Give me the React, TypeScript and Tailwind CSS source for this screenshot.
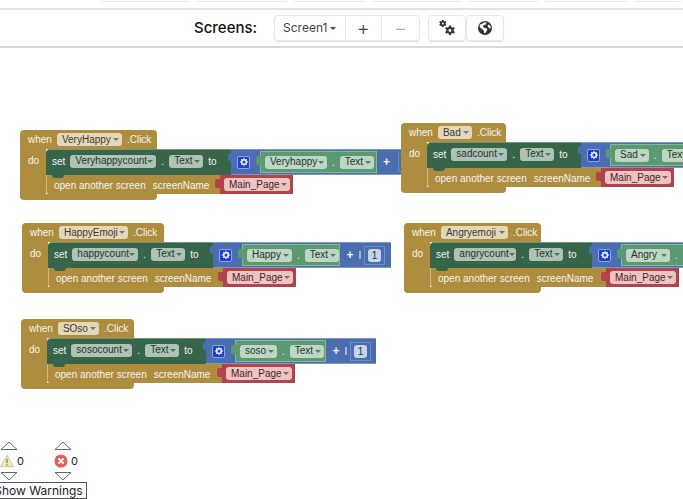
import React from "react";

function Field({ label, cls, wide }: { label: string; cls: string; wide: string }) {
  return (
    <span className={`flex h-[13px] shrink-0 items-center justify-between rounded-[3px] pl-[5px] pr-[3px] text-[10px] leading-none ${cls} ${wide}`}>
      <span className="whitespace-nowrap">{label}</span>
      <span className="h-0 w-0 border-x-[3px] border-t-[3px] border-x-transparent border-t-current opacity-60" />
    </span>
  );
}

function Notch({ cls }: { cls: string }) {
  return <span className={`absolute left-[-5px] top-[4px] h-[9px] w-[5px] rounded-l-[2px] ${cls}`} />;
}

function Gear() {
  return (
    <span className="flex h-[13px] w-[13px] shrink-0 items-center justify-center rounded-[2px] border border-[#8ea6d8] bg-[#1d3fd6]">
      <svg viewBox="0 0 12 12" className="h-[10px] w-[10px]" fill="none" stroke="#fff" strokeWidth="1.7">
        <circle cx="6" cy="6" r="2.8" />
        <path d="M6 1v1.5M6 9.5V11M1 6h1.5M9.5 6H11M2.5 2.5l1 1M8.5 8.5l1 1M2.5 9.5l1-1M8.5 3.5l1-1" strokeWidth="1.2" />
      </svg>
    </span>
  );
}

function Block(p: {
  pos: string;
  event: string;
  eventW: string;
  headW: string;
  setW: string;
  countName: string;
  countW: string;
  src: string;
  srcW: string;
  blueW: string;
  greenW: string;
  openW: string;
  showSum: boolean;
  one?: boolean;
}) {
  return (
    <div className={`absolute isolate font-['Liberation_Sans',Arial,sans-serif] text-[10px] text-[#f4f4f0] ${p.pos}`}>
      <div className={`flex h-[19px] items-center gap-[5px] rounded-t-[4px] bg-[#ae8d3e] pl-[8px] ${p.headW}`}>
        <span>when</span>
        <Field label={p.event} wide={p.eventW} cls="bg-[#e2d7bb] text-[#3f3a2a]" />
        <span>.Click</span>
      </div>
      <div className="flex">
        <div className="w-[26px] shrink-0 bg-[#ae8d3e] pl-[8px] pt-[4px]">do</div>
        <div className="flex flex-col">
          <div className="relative z-10 flex h-[26px]">
            <div className={`relative flex shrink-0 items-center gap-[5px] rounded-tl-[4px] border-t border-[#6f9580] bg-[#37654a] pb-[3px] pl-[6px] ${p.setW}`}>
              <span>set</span>
              <Field label={p.countName} wide={p.countW} cls="bg-[#afc2b6] text-[#22382c]" />
              <span>.</span>
              <Field label="Text" wide="w-[34px]" cls="bg-[#afc2b6] text-[#22382c]" />
              <span>to</span>
              <span className="absolute right-0 top-[3px] h-[8px] w-[3px] rounded-l-[2px] bg-[#4a6eb0]" />
              <span className="absolute bottom-[-3px] left-[6px] h-[3px] w-[12px] rounded-b-[4px] bg-[#37654a]" />
            </div>
            <div className={`flex shrink-0 items-center border-y border-[#7d97cb] bg-[#4a6eb0] pl-[6px] ${p.blueW}`}>
              <Gear />
              <div className={`relative ml-[10px] flex h-[22px] shrink-0 items-center gap-[5px] border border-[#86b996] bg-[#5b9a70] pl-[4px] ${p.greenW}`}>
                <Notch cls="bg-[#5b9a70]" />
                <Field label={p.src} wide={p.srcW} cls="bg-[#bdd6c5] text-[#1f3527]" />
                <span>.</span>
                <Field label="Text" wide="w-[34px]" cls="bg-[#bdd6c5] text-[#1f3527]" />
              </div>
              {p.showSum && (
                <>
                  <span className="ml-[6px] w-[8px] text-center text-[12px] font-bold">+</span>
                  <span className="ml-[5px] h-[8px] w-[2px] bg-[#9db2dc]" />
                  <div className="ml-[3px] flex h-[19px] w-[21px] shrink-0 items-center justify-center border border-[#6f8cc4] bg-[#4a6eb0]">
                    {p.one && <span className="flex h-[13px] w-[13px] items-center justify-center rounded-[3px] bg-[#c8d4ea] text-[#1c2c4d]">1</span>}
                  </div>
                </>
              )}
            </div>
          </div>
          <div className="flex h-[19px]">
            <div className={`flex shrink-0 items-center rounded-bl-[3px] border-l border-[#cdb883] bg-[#ae8d3e] pl-[7px] pt-[1px] ${p.openW}`}>
              <span className="whitespace-nowrap">open another screen</span>
              <span className="ml-[7px] whitespace-nowrap">screenName</span>
            </div>
            <div className="relative flex h-[19px] w-[73px] shrink-0 items-center bg-[#b2434b] pl-[4px]">
              <Notch cls="bg-[#b2434b]" />
              <Field label="Main_Page" wide="w-[66px]" cls="bg-[#edc4c4] text-[#4a1e22]" />
            </div>
          </div>
        </div>
      </div>
      <div className={`h-[6px] rounded-b-[4px] bg-[#ae8d3e] ${p.headW}`} />
    </div>
  );
}

function WarnCol({ icon, cls }: { icon: React.ReactNode; cls: string }) {
  return (
    <div className={`flex w-[24px] flex-col ${cls}`}>
      <svg viewBox="0 0 18 9" className="h-[9px] w-[18px]" fill="none" stroke="#666"><path d="M1 8.5 9 1l8 7.5z" /></svg>
      <div className="my-[3px] flex h-[16px] items-center gap-[3px] text-[11px] text-[#222]">
        {icon}
        <span>0</span>
      </div>
      <svg viewBox="0 0 18 9" className="h-[9px] w-[18px]" fill="none" stroke="#666"><path d="M1 .5 9 8l8-7.5z" /></svg>
    </div>
  );
}

function TopPill({ w }: { w: string }) {
  return <div className={`h-[2px] shrink-0 rounded-b-[2px] border-b border-[#e8e8e8] ${w}`} />;
}

export default function App() {
  return (
    <div className="relative h-[499px] w-[683px] overflow-hidden bg-white font-['Inter',sans-serif]">
      <div className="flex h-[10px] gap-[6px] border-b-2 border-[#e2e2e2] pl-[101px]">
        <TopPill w="w-[89px]" />
        <TopPill w="w-[92px]" />
        <TopPill w="w-[72px]" />
        <TopPill w="w-[90px]" />
        <TopPill w="w-[70px]" />
        <TopPill w="w-[84px]" />
        <TopPill w="w-[47px]" />
      </div>
      <div className="flex h-[38px] items-center border-b-2 border-[#d8d8d8] pl-[194px]">
        <span className="w-[80px] text-[15px] font-medium text-[#111]">Screens:</span>
        <div className="flex h-[26px] w-[146px] rounded-[4px] border border-[#e6e6e6] text-[#444] shadow-[0_1px_1px_#ddd]">
          <div className="flex w-[71px] items-center justify-center gap-[3px] border-r border-[#e6e6e6] text-[12px]">
            Screen1
            <span className="h-0 w-0 border-x-[3px] border-t-[3px] border-x-transparent border-t-[#444]" />
          </div>
          <div className="flex w-[37px] items-center justify-center border-r border-[#e6e6e6] text-[20px] font-light">+</div>
          <div className="flex w-[37px] items-center justify-center text-[20px] font-light text-[#aaa]">−</div>
        </div>
        <div className="ml-[8px] flex h-[26px]">
          <div className="flex w-[38px] items-center justify-center rounded-[4px] border border-[#e6e6e6] shadow-[0_1px_1px_#ddd]">
            <svg viewBox="0 0 18 18" className="h-[18px] w-[18px]" fill="#333">
              <path fillRule="evenodd" d="M11 6.5h2l.3 1.6 1.2.6 1.4-.8 1 1.7-1.2 1v1.4l1.2 1-1 1.7-1.4-.8-1.2.6-.3 1.6h-2l-.3-1.6-1.2-.6-1.4.8-1-1.7 1.2-1V10.6l-1.2-1 1-1.7 1.4.8 1.2-.6zM12 10a1.4 1.4 0 1 0 0 2.9 1.4 1.4 0 0 0 0-2.9z" />
              <path fillRule="evenodd" d="M4 1h1.6l.2 1.1.8.4 1-.6.8 1.3-.8.8v1l.8.8-.8 1.3-1-.6-.8.4-.2 1.1H4l-.2-1.1-.8-.4-1 .6-.8-1.3.8-.8v-1l-.8-.8.8-1.3 1 .6.8-.4zM4.8 3.5a1 1 0 1 0 0 2 1 1 0 0 0 0-2z" />
            </svg>
          </div>
          <div className="flex w-[38px] items-center justify-center rounded-[4px] border border-[#e6e6e6] shadow-[0_1px_1px_#ddd]">
            <svg viewBox="0 0 16 16" className="h-[16px] w-[16px]" fill="#333">
              <path d="M8 1a7 7 0 1 0 0 14A7 7 0 0 0 8 1zM3 4.5 5 4l1.5-1.5L9 2.3l.5 1.2L8 5 6.5 5 6 6.5 7.5 8l2 .2.8 1.3-1 2-1.3 1.8-.9-.4-.3-2.4L5 9 3 7.5 2.6 6zM12 4.5l1.4 1.7.5 2-1.2.2L11 7l-.4-1.5z" />
            </svg>
          </div>
        </div>
      </div>

      <Block pos="left-[20px] top-[130px]" event="VeryHappy" eventW="w-[65px]" headW="w-[137px]" setW="w-[185px]" countName="Veryhappycount" countW="w-[86px]" src="Veryhappy" srcW="w-[62px]" blueW="w-[180px]" greenW="w-[117px]" openW="w-[174px]" showSum />
      <Block pos="left-[401px] top-[123px]" event="Bad" eventW="w-[34px]" headW="w-[105px]" setW="w-[154px]" countName="sadcount" countW="w-[56px]" src="Sad" srcW="w-[34px]" blueW="w-[120px]" greenW="w-[120px]" openW="w-[174px]" showSum={false} />
      <Block pos="left-[22px] top-[223px]" event="HappyEmoji" eventW="w-[69px]" headW="w-[142px]" setW="w-[165px]" countName="happycount" countW="w-[66px]" src="Happy" srcW="w-[45px]" blueW="w-[178px]" greenW="w-[98px]" openW="w-[175px]" showSum one />
      <Block pos="left-[404px] top-[223px]" event="Angryemoji" eventW="w-[67px]" headW="w-[137px]" setW="w-[162px]" countName="angrycount" countW="w-[62px]" src="Angry" srcW="w-[44px]" blueW="w-[120px]" greenW="w-[120px]" openW="w-[176px]" showSum={false} />
      <Block pos="left-[21px] top-[319px]" event="SOso" eventW="w-[41px]" headW="w-[113px]" setW="w-[159px]" countName="sosocount" countW="w-[61px]" src="soso" srcW="w-[37px]" blueW="w-[170px]" greenW="w-[91px]" openW="w-[175px]" showSum one />

      <div className="absolute left-0 top-[441px] flex">
        <WarnCol
          cls=""
          icon={
            <svg viewBox="0 0 16 15" className="h-[14px] w-[14px]">
              <path d="M8 1 15.5 14H.5z" fill="#f6efa0" stroke="#bbb" />
              <path d="M8 5v5M8 11.2v1.3" stroke="#777" strokeWidth="1.4" />
            </svg>
          }
        />
        <WarnCol
          cls="ml-[30px]"
          icon={
            <svg viewBox="0 0 16 16" className="h-[14px] w-[14px]">
              <circle cx="8" cy="8" r="7.5" fill="#e2605c" />
              <path d="M5 5l6 6M11 5l-6 6" stroke="#fff" strokeWidth="2.2" />
            </svg>
          }
        />
      </div>
      <div className="absolute left-[-10px] top-[482px] flex h-[17px] w-[97px] items-center justify-center border border-[#555] bg-white text-[12px] text-[#222]">
        <span className="whitespace-nowrap">Show Warnings</span>
      </div>
    </div>
  );
}
